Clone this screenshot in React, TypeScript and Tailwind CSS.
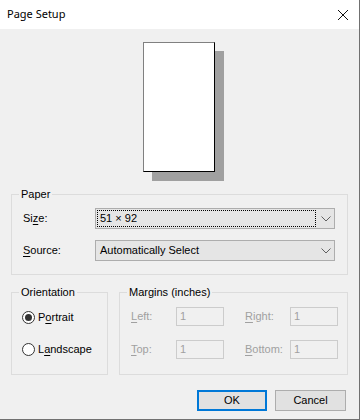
import React from "react";

const font = { fontFamily: '"Liberation Sans", Arial, sans-serif' };

function U({ children }: { children: React.ReactNode }) {
  return <span className="underline underline-offset-[2px]">{children}</span>;
}

function Chevron() {
  return (
    <svg width="10" height="6" viewBox="0 0 10 6" className="block">
      <path d="M0.5 0.5 L5 5 L9.5 0.5" fill="none" stroke="#606060" strokeWidth="1" />
    </svg>
  );
}

function Combo({ value, focused }: { value: string; focused?: boolean }) {
  return (
    <div className="w-[240px] h-[21px] border border-[#adadad] bg-[#e5e5e5] flex items-center">
      <div className="flex-1 h-full p-[1px]">
        <div
          className={
            "h-full flex items-center pl-[2px] " +
            (focused ? "border border-dotted border-[#000]" : "border border-transparent")
          }
        >
          {value}
        </div>
      </div>
      <div className="w-[17px] h-full flex items-center justify-center">
        <Chevron />
      </div>
    </div>
  );
}

function Radio({ checked, children }: { checked?: boolean; children: React.ReactNode }) {
  return (
    <div className="flex items-center h-[14px]">
      <div className="w-[13px] h-[13px] rounded-full border border-[#333] bg-white flex items-center justify-center">
        {checked && <div className="w-[7px] h-[7px] rounded-full bg-[#333]" />}
      </div>
      <span className="ml-[3px]">{children}</span>
    </div>
  );
}

function MarginField({ u, rest }: { u: string; rest: string }) {
  return (
    <div className="flex items-center">
      <span className="w-[45px] text-[#a0a0a0]">
        <U>{u}</U>
        {rest}
      </span>
      <div className="w-[48px] h-[19px] border border-[#cccccc] bg-[#f0f0f0] flex items-center pl-[3px] text-[#a0a0a0]">
        1
      </div>
    </div>
  );
}

export default function App() {
  return (
    <div
      className="w-[360px] h-[420px] bg-[#f0f0f0] border-r border-b border-[#707070] text-[11px] text-black overflow-hidden"
      style={font}
    >
      {/* Title bar */}
      <div className="h-[29px] bg-white flex items-center justify-between pl-[7px] pr-[11px]">
        <span className="text-[11px] text-black" style={{ fontFamily: '"Noto Sans", sans-serif' }}>
          Page Setup
        </span>
        <svg width="10" height="10" viewBox="0 0 10 10" className="block">
          <path d="M0 0 L10 10 M10 0 L0 10" stroke="#111" strokeWidth="1" />
        </svg>
      </div>

      {/* Preview */}
      <div className="flex pt-[13px] pl-[143px]">
        <div className="w-[72px] h-[130px] bg-white border-l border-t border-l-[#808080] border-t-[#808080] border-r border-b border-r-black border-b-black shadow-[9px_9px_0_#a0a0a0]" />
      </div>

      {/* Paper group */}
      <fieldset className="ml-[11px] w-[337px] mt-[15px] border border-[#dcdcdc] h-[88px] pb-0">
        <legend className="ml-[7px] px-[2px] leading-[14px]">Paper</legend>
        <div className="flex flex-col gap-[11px] pt-[7px] pl-[11px]">
          <div className="flex items-center">
            <span className="w-[72px]">
              Si<U>z</U>e:
            </span>
            <Combo value="51 × 92" focused />
          </div>
          <div className="flex items-center">
            <span className="w-[72px]">
              <U>S</U>ource:
            </span>
            <Combo value="Automatically Select" />
          </div>
        </div>
      </fieldset>

      {/* Bottom groups */}
      <div className="flex ml-[11px] mt-[10px] gap-[11px]">
        <fieldset className="w-[97px] h-[90px] border border-[#dcdcdc]">
          <legend className="ml-[7px] px-[2px] leading-[14px]">Orientation</legend>
          <div className="flex flex-col gap-[18px] pt-[11px] pl-[10px]">
            <Radio checked>
              P<U>o</U>rtrait
            </Radio>
            <Radio>
              L<U>a</U>ndscape
            </Radio>
          </div>
        </fieldset>
        <fieldset className="w-[229px] h-[90px] border border-[#dcdcdc]">
          <legend className="ml-[7px] px-[2px] leading-[14px]">Margins (inches)</legend>
          <div className="grid grid-cols-[93px_93px] gap-x-[21px] gap-y-[14px] pt-[8px] pl-[11px]">
            <MarginField u="L" rest="eft:" />
            <MarginField u="R" rest="ight:" />
            <MarginField u="T" rest="op:" />
            <MarginField u="B" rest="ottom:" />
          </div>
        </fieldset>
      </div>

      {/* Buttons */}
      <div className="flex justify-end gap-[8px] pr-[13px] mt-[15px]">
        <button className="w-[70px] h-[21px] border-2 border-[#0078d7] bg-[#e1e1e1] flex items-center justify-center">
          OK
        </button>
        <button className="w-[71px] h-[21px] border border-[#adadad] bg-[#e1e1e1] flex items-center justify-center">
          Cancel
        </button>
      </div>
    </div>
  );
}
